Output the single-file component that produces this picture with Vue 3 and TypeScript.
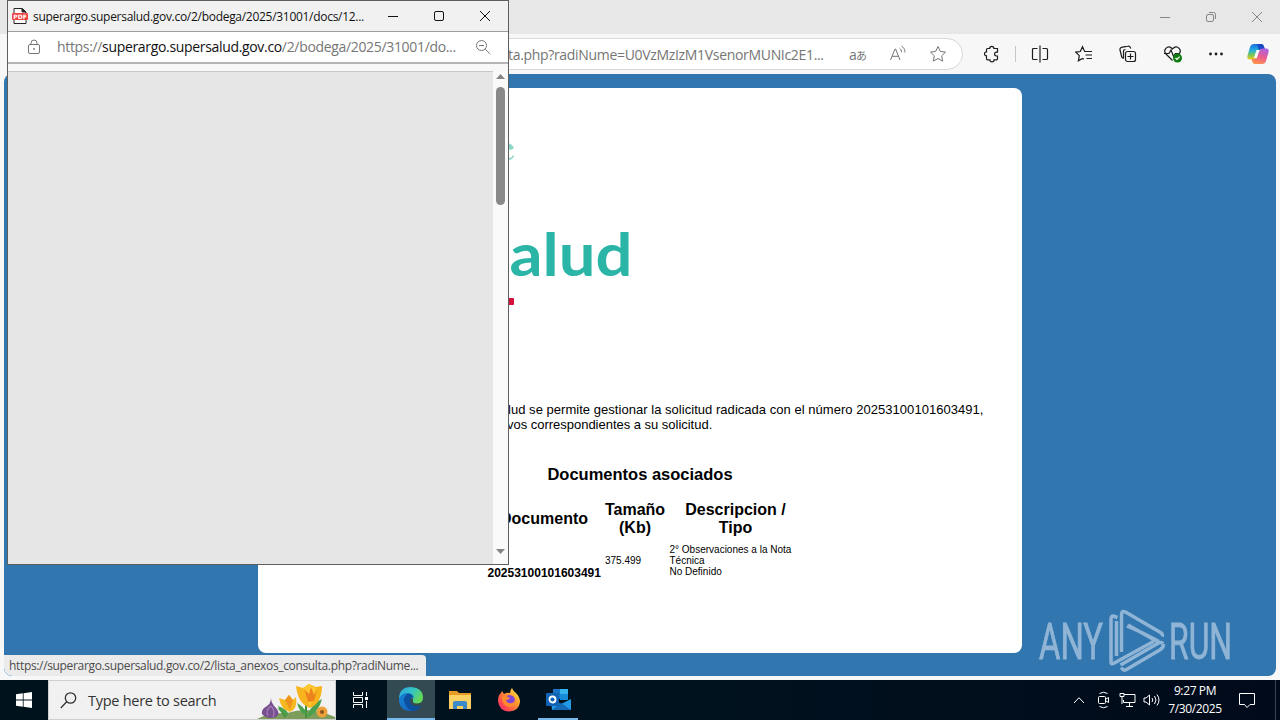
<script setup lang="ts">
interface DocumentRow {
  id: string
  size: string
  description: string
  kind: string
}

const rows: DocumentRow[] = [
  { id: '20253100101603491', size: '375.499', description: '2° Observaciones a la Nota Técnica', kind: 'No Definido' },
]
</script>

<template>
  <div class="desktop">
    <main class="browser">
      <header class="titlebar">
        <span class="winbtn"><svg width="12" height="12" viewBox="0 0 12 12"><path d="M1 6.5h10" /></svg></span>
        <span class="winbtn"><svg width="12" height="12" viewBox="0 0 12 12"><rect x="1.5" y="3.5" width="7" height="7" rx="1.5" /><path d="M4 1.5h4.5a2 2 0 0 1 2 2V8" /></svg></span>
        <span class="winbtn"><svg width="12" height="12" viewBox="0 0 12 12"><path d="M1 1l10 10M11 1L1 11" /></svg></span>
      </header>

      <nav class="toolbar">
        <div class="pill">
          <span class="pill-url">ta.php?radiNume=U0VzMzIzM1VsenorMUNIc2E1...</span>
          <span class="pill-icon translate">a<i>あ</i></span>
          <span class="pill-icon">
            <svg width="18" height="18" viewBox="0 0 18 18"><path d="M1.500 15L6 4h.6L11 15M3 11.300h6.500M10.500 3.200c1.400 1 2 2.300 2 4M12.500 1c2.200 1.500 3.500 3.600 3.500 6.500" /></svg>
          </span>
          <span class="pill-icon">
            <svg width="18" height="18" viewBox="0 0 18 18"><path d="M9 1.500l2.300 4.900 5.200.7-3.800 3.700.95 5.300L9 13.500l-4.650 2.600.95-5.300L1.500 7.100l5.200-.7z" /></svg>
          </span>
        </div>
        <div class="tools">
          <span class="tool puzzle">
            <svg width="18" height="18" viewBox="0 0 18 18"><path d="M4.500 3.500h2.200a2.100 2.100 0 0 1 4.200 0h3.600v3.700h-1a1.900 1.900 0 0 0 0 3.800h1v2.800a1 1 0 0 1-1 1h-2.400a2.100 2.100 0 0 1-4.200 0H4.500a1 1 0 0 1-1-1v-2.900a2 2 0 0 1 0-4V4.500a1 1 0 0 1 1-1z" /></svg>
          </span>
          <i class="divider"></i>
          <span class="tool">
            <svg width="18" height="18" viewBox="0 0 18 18"><path d="M9 .5v17M6.500 3.500h-4a1 1 0 0 0-1 1v9a1 1 0 0 0 1 1h4M11.500 3.500h4a1 1 0 0 1 1 1v9a1 1 0 0 1-1 1h-4" /></svg>
          </span>
          <span class="tool">
            <svg width="18" height="18" viewBox="0 0 18 18"><path d="M11.500 6.500H9.700L7.500 1.700 5.300 6.500.8 7.100l3.500 3.500-.9 5.200 4.100-2.300 1.400.8M11.500 6.500h5.500M10.500 10h6.500M11.500 13.500h5.500" /></svg>
          </span>
          <span class="tool">
            <svg width="18" height="18" viewBox="0 0 18 18"><rect x="6.500" y="6.500" width="10" height="10" rx="2" /><path d="M11.500 8.500v6M8.500 11.500h6M4.500 13.500c-1.200-.3-1.600-.8-1.900-2L1 5c-.3-1.300.2-2.200 1.500-2.600l6.300-1.200c1.300-.3 2.400.3 2.700 1.600l.2.700M4.500 13.500v-7q0-2 2-2" /></svg>
          </span>
          <span class="tool heart">
            <svg width="20" height="18" viewBox="0 0 20 18"><path d="M9.500 15.500L3 9C-.5 5 4.500-.2 8.500 3l1 1 1-1c4-3.200 9 2 5.500 6M1 8.500h5l2-3.500 2.500 6.500 1.800-3H16" /><circle cx="14.500" cy="13" r="4.500" fill="#107c10" stroke="none" /><path class="tick" d="M12.500 13l1.500 1.500 2.700-2.800" /></svg>
          </span>
          <span class="tool">
            <svg width="16" height="4" viewBox="0 0 16 4"><g class="solid"><circle cx="2.500" cy="2" r="1.400" /><circle cx="8" cy="2" r="1.400" /><circle cx="13.500" cy="2" r="1.400" /></g></svg>
          </span>
          <span class="tool copilot">
            <svg width="24" height="24" viewBox="0 0 24 24">
              <defs>
                <linearGradient id="cpA" x1="0" y1="0" x2="0" y2="1"><stop offset="0" stop-color="#1b6fe0" /><stop offset=".4" stop-color="#24aee0" /><stop offset=".7" stop-color="#77c65a" /><stop offset="1" stop-color="#f3c91d" /></linearGradient>
                <linearGradient id="cpB" x1=".7" y1="0" x2=".3" y2="1"><stop offset="0" stop-color="#a964e0" /><stop offset=".5" stop-color="#ea5c90" /><stop offset="1" stop-color="#ff9247" /></linearGradient>
              </defs>
              <g stroke="none">
                <path d="M8 2h7q2 0 2.700 2.500L18.500 7h-3q-2 0-2.700 2l-2 6q-.8 2.500-3.300 2.500H4Q.5 17.500 1.500 13.500L4 5Q5 2 8 2z" fill="url(#cpA)" />
                <path d="M15.800 2Q17.500 2 18.200 5l.8 2h-3.500q-1.600 0-2.300 1.500L11 2z" fill="#1b4bc4" />
                <path d="M16 22H9q-2 0-2.700-2.500L5.500 17h3q2 0 2.700-2l2-6q.8-2.500 3.300-2.500H20q3.500 0 2.500 4L20 19q-1 3-4 3z" fill="url(#cpB)" />
                <path d="M10.500 8h3.500l-1.300 1.700-2 6.300H8z" fill="#fff" />
              </g>
            </svg>
          </span>
        </div>
      </nav>

      <section class="viewport">
        <article class="sheet">
          <svg class="brand" width="140" height="190" viewBox="0 0 140 190">
            <g class="soft">
              <path d="M0 19q4 1 6 5l-3 2-3-1zM1 34q3 0 4-3l1 1q-1 3-5 4z" fill="#8ed6ca" />
              <text x="1.500" y="151.500" textLength="123" lengthAdjust="spacingAndGlyphs">alud</text>
              <rect x="0" y="174" width="6" height="7" rx="1" fill="#d3103c" />
            </g>
          </svg>
          <p class="notice">
            <span class="line first">lud se permite gestionar la solicitud radicada con el número 20253100101603491,</span>
            <span class="line second">vos correspondientes a su solicitud.</span>
          </p>
          <h2>Documentos asociados</h2>
          <div class="table">
            <b>Documento</b><b>Tamaño (Kb)</b><b>Descripcion / Tipo</b>
            <template v-for="row in rows" :key="row.id">
              <strong>{{ row.id }}</strong>
              <span class="size">{{ row.size }}</span>
              <span class="desc">{{ row.description }}<br />{{ row.kind }}</span>
            </template>
          </div>
        </article>
        <div class="status"><span>https://superargo.supersalud.gov.co/2/lista_anexos_consulta.php?radiNume...</span></div>
        <svg class="watermark" width="210" height="70" viewBox="0 0 210 70">
          <text x="3" y="52" textLength="64" lengthAdjust="spacingAndGlyphs">ANY</text>
          <text x="133" y="52" textLength="63" lengthAdjust="spacingAndGlyphs">RUN</text>
          <path transform="translate(1 0)" d="M80.500 10.500l-4-1.500q-2.500 0-2.500 3v43q0 2.500 2.500 1.500l40-22M79.500 49V14M84.500 45V8q0-5 4-3l35 20.500q3 2 1.500 4M91 18l31 17.500q3 .5 4-1M84.500 45V8M90 19q17 7 32 15.500M84.500 60.500q1.500 4 5 2l34-20q3-2 3-5.500M83.500 58l38-22" />
        </svg>
      </section>
    </main>

    <aside class="popup">
      <header class="popup-title">
        <svg class="pdf" width="16" height="18" viewBox="0 0 16 18"><path d="M2 1.500h8.500L14 5v11.500H2z" fill="#fff" stroke="#252525" /><path d="M10 1.500V5h4" fill="#222" stroke="#252525" /><rect x="0" y="6" width="16" height="7" rx="1" fill="#ee4444" stroke="none" /><text x="8" y="11.800" text-anchor="middle">PDF</text></svg>
        <span class="popup-name">superargo.supersalud.gov.co/2/bodega/2025/31001/docs/12...</span>
        <span class="winbtn"><svg width="12" height="12" viewBox="0 0 12 12"><path d="M1 6.500h10" /></svg></span>
        <span class="winbtn"><svg width="12" height="12" viewBox="0 0 12 12"><rect x="1.500" y="1.500" width="9" height="9" rx="1.500" /></svg></span>
        <span class="winbtn"><svg width="12" height="12" viewBox="0 0 12 12"><path d="M1 1l10 10M11 1L1 11" /></svg></span>
      </header>
      <div class="popup-bar">
        <svg width="14" height="16" viewBox="0 0 14 16"><rect x="1.500" y="5.500" width="11" height="9" rx="1.500" /><path d="M4 5.500V4q0-3 3-3t3 3v1.500" /><circle cx="7" cy="10" r=".6" /></svg>
        <span class="popup-url">https://<em>superargo.supersalud.gov.co</em>/2/bodega/2025/31001/do...</span>
        <svg class="lens" width="16" height="16" viewBox="0 0 16 16"><circle cx="6.500" cy="6.500" r="5" /><path d="M10.200 10.200l5 4.800M4 6.500h5" /></svg>
      </div>
      <div class="popup-gap"></div>
      <div class="popup-body">
        <div class="blank"></div>
        <div class="scroll">
          <svg width="9" height="5" viewBox="0 0 9 5"><path d="M0 5L4.500 0 9 5z" /></svg>
          <div class="thumb"></div>
          <svg class="down" width="9" height="5" viewBox="0 0 9 5"><path d="M0 0h9L4.500 5z" /></svg>
        </div>
      </div>
    </aside>

    <footer class="taskbar">
      <span class="start"><svg width="16" height="16" viewBox="0 0 16 16"><path d="M0 2.200L6.800 1.300v6.300H0zM7.600 1.200L16 0v7.600H7.600zM0 8.400h6.800v6.300L0 13.800zM7.600 8.400H16V16l-8.400-1.200z" fill="#fff" /></svg></span>
      <div class="search">
        <svg width="17" height="17" viewBox="0 0 17 17"><circle cx="10.500" cy="6" r="5.200" /><path d="M6.700 9.800L.8 16" /></svg>
        <span>Type here to search</span>
        <svg class="flowers" width="82" height="38" viewBox="-4 0 82 38">
          <path d="M0 38q12-7 30-6 20-6 36 0 10 2 14 6z" fill="#7d9d5a" />
          <path d="M28 37q-5-8-8-10 8 2 9 8zM48 37V22h2v15z" fill="#3f8f3c" />
          <path d="M50 35q5-13 15-17-3 12-13 18zM49 35q-7-5-9-13 7 4 9 9zM31 35q-8-3-10-10 8 3 10 7z" fill="#4aa04c" />
          <path d="M14 17q0 5 5 10 5 6 0 9-9 3-14-3-1-5 5-8 4-3 4-8z" fill="#76508f" />
          <path d="M14 25q-6 4-3 10M14 25q5 5 2 11" fill="none" stroke="#a47bb8" />
          <path d="M22 17l6 2 4-5 4 5 3-3q2 12-6 15-9-2-11-14z" fill="#f5b820" />
          <path d="M28 19l4-5 4 5-3 10z" fill="#ef941e" />
          <path d="M39 5l7 2 6-4 7 3 6-1q0 17-12 22-12-4-14-22z" fill="#f8b41c" />
          <path d="M46 7l6-4 7 4-6 19z" fill="#ffc832" />
          <path d="M47 8l5 5 2-7 3 8 3-5-3 11-6 1z" fill="#ed831c" />
          <circle cx="65" cy="31" r="5.500" fill="#eda13a" /><circle cx="65" cy="31" r="2" fill="#8c5222" />
        </svg>
      </div>
      <span class="app">
        <svg class="tasks" width="17" height="16" viewBox="0 0 17 16"><path d="M1.500 0v3.500h9V0M1.500 16v-3.500h9V16M1.500 5.500h9v5h-9zM14.500 0v4M14.500 9v7" /><path d="M13 5h3v3h-3z" fill="#fff" stroke="none" /></svg>
      </span>
      <span class="app active">
        <svg width="26" height="26" viewBox="0 0 26 26">
          <defs>
            <linearGradient id="edTop" x1="0" y1="0" x2="1" y2=".5"><stop offset="0" stop-color="#2aa3e5" /><stop offset=".55" stop-color="#35c5c2" /><stop offset="1" stop-color="#62d957" /></linearGradient>
            <linearGradient id="edLow" x1="0" y1="0" x2="1" y2="1"><stop offset="0" stop-color="#1783d7" /><stop offset="1" stop-color="#1260b6" /></linearGradient>
          </defs>
          <path d="M1 13Q1 1 13 1q12 1 12 11 0 5-6 5.500-5 0-4-3 0-6-6-6-6 0-8 4.500z" fill="url(#edTop)" />
          <path d="M1 13q2-6 8-6 6 0 7 5-4-1-5 2 0 7 7 7 3 0 5-1-4 5-10 5Q1 25 1 13z" fill="url(#edLow)" />
          <path d="M9 8q-5 4-2 10 3 6 8 7 5-1 8-5-8 2-11-4-1-5 3-5-2-4-6-3z" fill="#0c4f9f" />
        </svg>
      </span>
      <span class="app">
        <svg width="22" height="20" viewBox="0 0 22 20"><path d="M0 1h8l2 2h12v5H0z" fill="#e79c25" /><path d="M0 5h22v14H0z" fill="#fbd163" /><path d="M4 19v-6q0-2 2-2h10q2 0 2 2v6h-4v-3H8v3z" fill="#3a8ac7" /></svg>
      </span>
      <span class="app">
        <svg width="24" height="24" viewBox="0 0 24 24">
          <defs><linearGradient id="ffx" x1="1" y1="0" x2="0" y2="1"><stop offset="0" stop-color="#fff04a" /><stop offset=".4" stop-color="#ff9a2e" /><stop offset=".75" stop-color="#ff4652" /><stop offset="1" stop-color="#e42b83" /></linearGradient></defs>
          <path d="M5 3l2 3q3-2 6-1 0-3 2-5 1 3 4 5 4 4 4 9-1 9-11 9.500Q2 23 1 13q0-6 3-8z" fill="url(#ffx)" />
          <circle cx="12.500" cy="12.500" r="5.500" fill="#8145d8" /><path d="M5 8q4-1 6 1l2 1q-1 2-4 2 1 4 6 3 3-1 3-4 2 7-5 8-8 0-8-11z" fill="#ff8b2d" />
        </svg>
      </span>
      <span class="app open">
        <svg width="25" height="23" viewBox="0 0 25 23"><path d="M7 1h15v10H7z" fill="#1673c5" /><path d="M14 1h8v5h-8z" fill="#35b3ef" /><path d="M14 6h8v6h-8z" fill="#1689d9" /><path d="M5 11l10 5 10-5v11H6z" fill="#2299e4" /><path d="M6 22l9-7 10 7z" fill="#1569b7" /><rect y="5" width="13" height="13" rx="1" fill="#0f62b4" /><circle cx="6.500" cy="11.500" r="3" fill="none" stroke="#fff" stroke-width="1.800" /></svg>
      </span>
      <div class="tray">
        <span><svg width="12" height="8" viewBox="0 0 12 8"><path d="M1 7l5-5.300L11 7" /></svg></span>
        <span><svg width="14" height="18" viewBox="0 0 14 18"><rect x="2.500" y="5.500" width="7" height="7" rx="1" /><path d="M10 8l2.500-1.500v5L10 10M3.500 2.500q4-2.500 8 0M3.500 15.500q4 2.500 8 0" /></svg></span>
        <span><svg width="17" height="16" viewBox="0 0 17 16"><path d="M5 2.500h11v8H4.500V8M10.500 10.500v3.500M7 14.500h7M1 1.500h4v3H1zM3 4.500V12" /></svg></span>
        <span><svg width="17" height="14" viewBox="0 0 17 14"><path d="M1 5h2l3.500-3v10L3 9H1zM9 5q1.500 2 0 4M11.500 3q3 4 0 8M14 1.500q4 5.500 0 11" /></svg></span>
      </div>
      <div class="clock"><span>9:27 PM</span><span>7/30/2025</span></div>
      <svg class="note" width="18" height="17" viewBox="0 0 18 17"><path d="M1.500 1.500h15v11H12L9 15.500l-2.500-3h-5z" /></svg>
      <i class="peek"></i>
    </footer>
  </div>
</template>

<style>
body {
  background: #f7f7f7;
  overflow: hidden;
}
</style>

<style scoped>
.desktop {
  position: relative;
  display: flex;
  flex-direction: column;
  width: 1280px;
  height: 720px;
  overflow: hidden;
  background: #f7f7f7;
  font-family: "Open Sans", "Noto Sans", sans-serif;
  color: #1b1b1b;
}
svg {
  display: block;
  flex: none;
  fill: none;
  stroke: currentColor;
  stroke-width: 1;
}
span, b, strong, h2 { white-space: nowrap; }
.browser { display: flex; flex-direction: column; height: 680px; }
.titlebar {
  display: flex;
  justify-content: flex-end;
  height: 34px;
  background: #e7e7e7;
  color: #858585;
}
.winbtn { display: flex; width: 46px; flex: none; align-items: center; justify-content: center; }
.toolbar { display: flex; height: 40px; }
.pill {
  display: flex;
  align-items: center;
  box-sizing: border-box;
  width: 862px;
  height: 32px;
  margin: 4px 0 0 101px;
  padding-right: 4px;
  border: 1px solid #dcd6d6;
  border-radius: 16px;
  background: #fff;
  color: #757575;
}
.pill-url { margin-left: 406px; width: 330px; font-size: 14px; letter-spacing: -0.32px; }
.pill-icon { display: flex; width: 40px; justify-content: center; }
.translate { align-items: baseline; font: 14px "Open Sans", sans-serif; }
.translate i { margin-left: -1px; font: 11px "Noto Sans CJK JP", sans-serif; }
.tools { display: flex; align-items: center; margin-left: 6px; color: #1d1d1d; }
.tools svg { stroke-width: 1.200; }
.tool { display: flex; width: 44px; justify-content: center; }
.puzzle { padding-left: 1px; width: 43px; }
.heart { padding-left: 1px; width: 43px; }
.divider { width: 1px; height: 16px; margin: 0 2px; background: #c7c7c7; }
.solid { fill: #1d1d1d; stroke: none; }
.tick { stroke: #fff; }
.copilot { width: 40px; }
.viewport {
  position: relative;
  width: 1272px;
  height: 602px;
  margin-left: 4px;
  overflow: hidden;
  border-radius: 8px;
  background: #3176af;
}
.sheet {
  width: 764px;
  height: 565px;
  margin: 14px 0 0 254px;
  overflow: hidden;
  border-radius: 8px;
  background: #fff;
  font-family: "Liberation Sans", Arial, sans-serif;
  color: #000;
}
.brand { margin: 36px 0 0 250px; stroke: none; }
.soft { filter: blur(0.7px); }
.brand text { font: 700 59.500px Lato, sans-serif; fill: #2bb5a6; }
.notice { margin: 88px 0 0 250px; font-size: 13px; line-height: 15px; }
.line { display: block; }
.first { letter-spacing: 0.035px; }
.second { margin-left: -1px; letter-spacing: -0.02px; }
h2 { margin: 32px 0 0; font-size: 16.500px; line-height: 20px; text-align: center; }
.table {
  display: grid;
  grid-template-columns: 113px 61px 132px;
  column-gap: 4px;
  grid-template-rows: 36px 33px;
  row-gap: 7px;
  align-items: center;
  margin: 17px 0 0 229.500px;
}
.table b { font-size: 16px; line-height: 18px; text-align: center; white-space: normal; }
.table strong { align-self: end; font-size: 12px; line-height: 16px; margin-bottom: -4px; }
.table span { font-size: 10px; line-height: 11px; }
.table .size { padding-left: 0.500px; }
.desc { white-space: normal; }
.status {
  position: absolute;
  left: 0;
  bottom: 0;
  display: flex;
  align-items: center;
  box-sizing: border-box;
  width: 422px;
  height: 21px;
  padding-left: 5px;
  border-radius: 0 4px 0 8px;
  background: #ebebeb;
  color: #4c4c4c;
  font-size: 12px;
  letter-spacing: -0.34px;
}
.watermark { position: absolute; left: 1032px; top: 533px; overflow: visible; color: #a9c5df; opacity: 0.8; stroke-width: 3.500; }
.watermark text { font: 50px Roboto, sans-serif; fill: currentColor; stroke-width: 0.800; }
.popup {
  position: absolute;
  left: 7px;
  top: 0;
  display: flex;
  flex-direction: column;
  box-sizing: border-box;
  width: 502px;
  height: 565px;
  border: 1px solid #5e5e5e;
  background: #fff;
}
.popup-title {
  display: flex;
  align-items: center;
  height: 30px;
  padding-left: 4px;
  border-bottom: 1px solid #9d9d9d;
  background: #f1f1f1;
  color: #111;
}
.pdf text { font: 700 6px "DejaVu Sans", sans-serif; fill: #fff; stroke: none; }
.popup-name { width: 337px; margin-left: 5px; font-size: 12px; letter-spacing: -0.29px; }
.popup-bar {
  display: flex;
  align-items: center;
  height: 30px;
  padding-left: 19px;
  border-bottom: 2px solid #b5b5b5;
  color: #767676;
}
.popup-url { width: 418px; margin-left: 16px; margin-top: -2px; font-size: 14px; letter-spacing: -0.33px; }
.popup-url em { color: #111; font-style: normal; }
.popup-gap { height: 7px; background: #f8f8f8; }
.popup-body { display: flex; flex: 1; }
.blank { flex: 1; background: #e6e6e6; border-top: 1px solid #c9c9c9; }
.scroll {
  display: flex;
  flex-direction: column;
  align-items: center;
  width: 15px;
  padding: 3px 0 10px;
  box-sizing: border-box;
  background: #fafafa;
}
.scroll svg { fill: #858585; stroke: none; }
.thumb { width: 9px; height: 118px; margin-top: 8px; border-radius: 5px; background: #898989; }
.down { margin-top: auto; }
.taskbar {
  display: flex;
  height: 40px;
  background: linear-gradient(90deg, #00131c, #01121f 55%, #010a1a);
  color: #fff;
}
.start { display: flex; width: 48px; align-items: center; justify-content: center; }
.start svg, .flowers { stroke: none; }
.search {
  display: flex;
  align-items: center;
  box-sizing: border-box;
  width: 288px;
  padding-left: 11px;
  border: 1px solid #cfcfcf;
  background: #f1f1f1;
  color: #333;
}
.search svg { stroke-width: 1.300; }
.search span { width: 150px; margin-left: 11px; font-size: 14.500px; letter-spacing: -0.27px; }
.search .flowers { align-self: flex-end; margin-left: auto; }
.app { display: flex; width: 49px; align-items: center; justify-content: center; }
.app svg { stroke: none; }
.app .tasks { stroke: #fff; }
.active { width: 48px; box-sizing: border-box; margin-left: 2px; background: #334a52; border-bottom: 2px solid #76b9ed; }
.open { width: 40px; box-sizing: border-box; margin: 0 3px 0 5px; border-bottom: 2px solid #76b9ed; }
.tray { display: flex; align-items: center; margin-left: auto; }
.tray span { display: flex; width: 24px; justify-content: center; }
.clock {
  display: flex;
  flex-direction: column;
  align-items: center;
  width: 64px;
  padding-top: 2px;
  font-size: 12px;
  line-height: 18px;
  letter-spacing: -0.38px;
}
.note { align-self: center; margin: 0 19px 0 11px; }
.peek { width: 1px; margin-right: 4px; background: #3a4350; }
</style>
